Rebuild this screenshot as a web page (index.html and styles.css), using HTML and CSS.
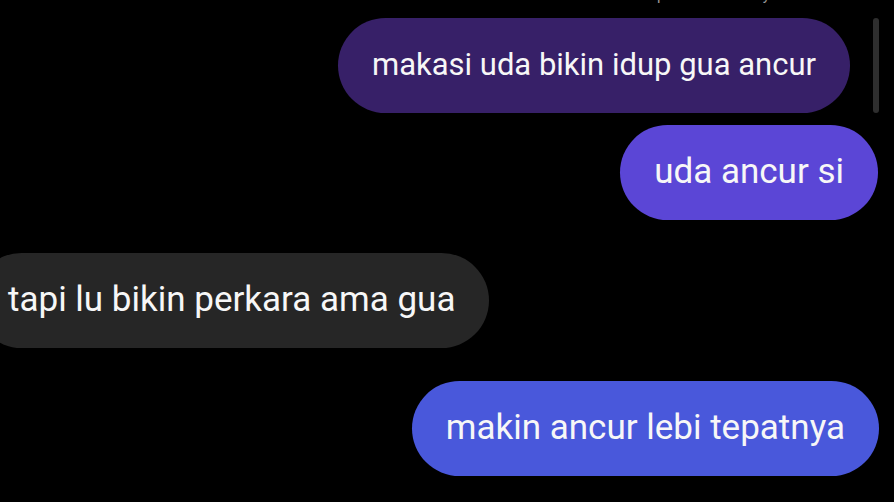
FILE: index.html
```html
<!DOCTYPE html>
<html lang="id">
<head>
<meta charset="utf-8">
<title>Chat</title>
<link rel="stylesheet" href="styles.css">
</head>
<body>
<div class="screen">
  <div class="caption">pesan dibalas Ayu</div>
  <div class="thread">
    <div class="bubble out first">makasi uda bikin idup gua ancur</div>
    <div class="bubble out second">uda ancur si</div>
    <div class="bubble in">tapi lu bikin perkara ama gua</div>
    <div class="bubble out third">makin ancur lebi tepatnya</div>
  </div>
  <div class="scrollbar"></div>
</div>
</body>
</html>
```
FILE: styles.css
```css
html, body {
  margin: 0;
  padding: 0;
  background: #000;
}
.screen {
  position: relative;
  width: 894px;
  height: 502px;
  overflow: hidden;
  background: #000;
  font-family: Roboto, "Noto Sans", sans-serif;
}
.caption {
  position: absolute;
  top: -14px;
  left: 657px;
  font-size: 15px;
  line-height: 18px;
  color: #9a9a9a;
  white-space: nowrap;
}
.thread {
  display: flex;
  flex-direction: column;
  padding-top: 18px;
}
.bubble {
  height: 95px;
  box-sizing: border-box;
  display: flex;
  align-items: center;
  padding: 0 34px 2px;
  border-radius: 48px;
  font-size: 35px;
  color: #f7f7f7;
  white-space: nowrap;
}
.out { align-self: flex-end; }
.first {
  background: #372068;
  margin-right: 44px;
  font-size: 31px;
}
.second {
  background: #5b46d6;
  margin-right: 16px;
  margin-top: 12px;
}
.in {
  align-self: flex-start;
  background: #262626;
  margin-left: -26px;
  margin-top: 33px;
}
.third {
  background: #4958db;
  margin-right: 15px;
  margin-top: 33px;
}
.scrollbar {
  position: absolute;
  left: 873px;
  top: 18px;
  width: 6px;
  height: 95px;
  border-radius: 3px;
  background: #2e2e2e;
}
```
